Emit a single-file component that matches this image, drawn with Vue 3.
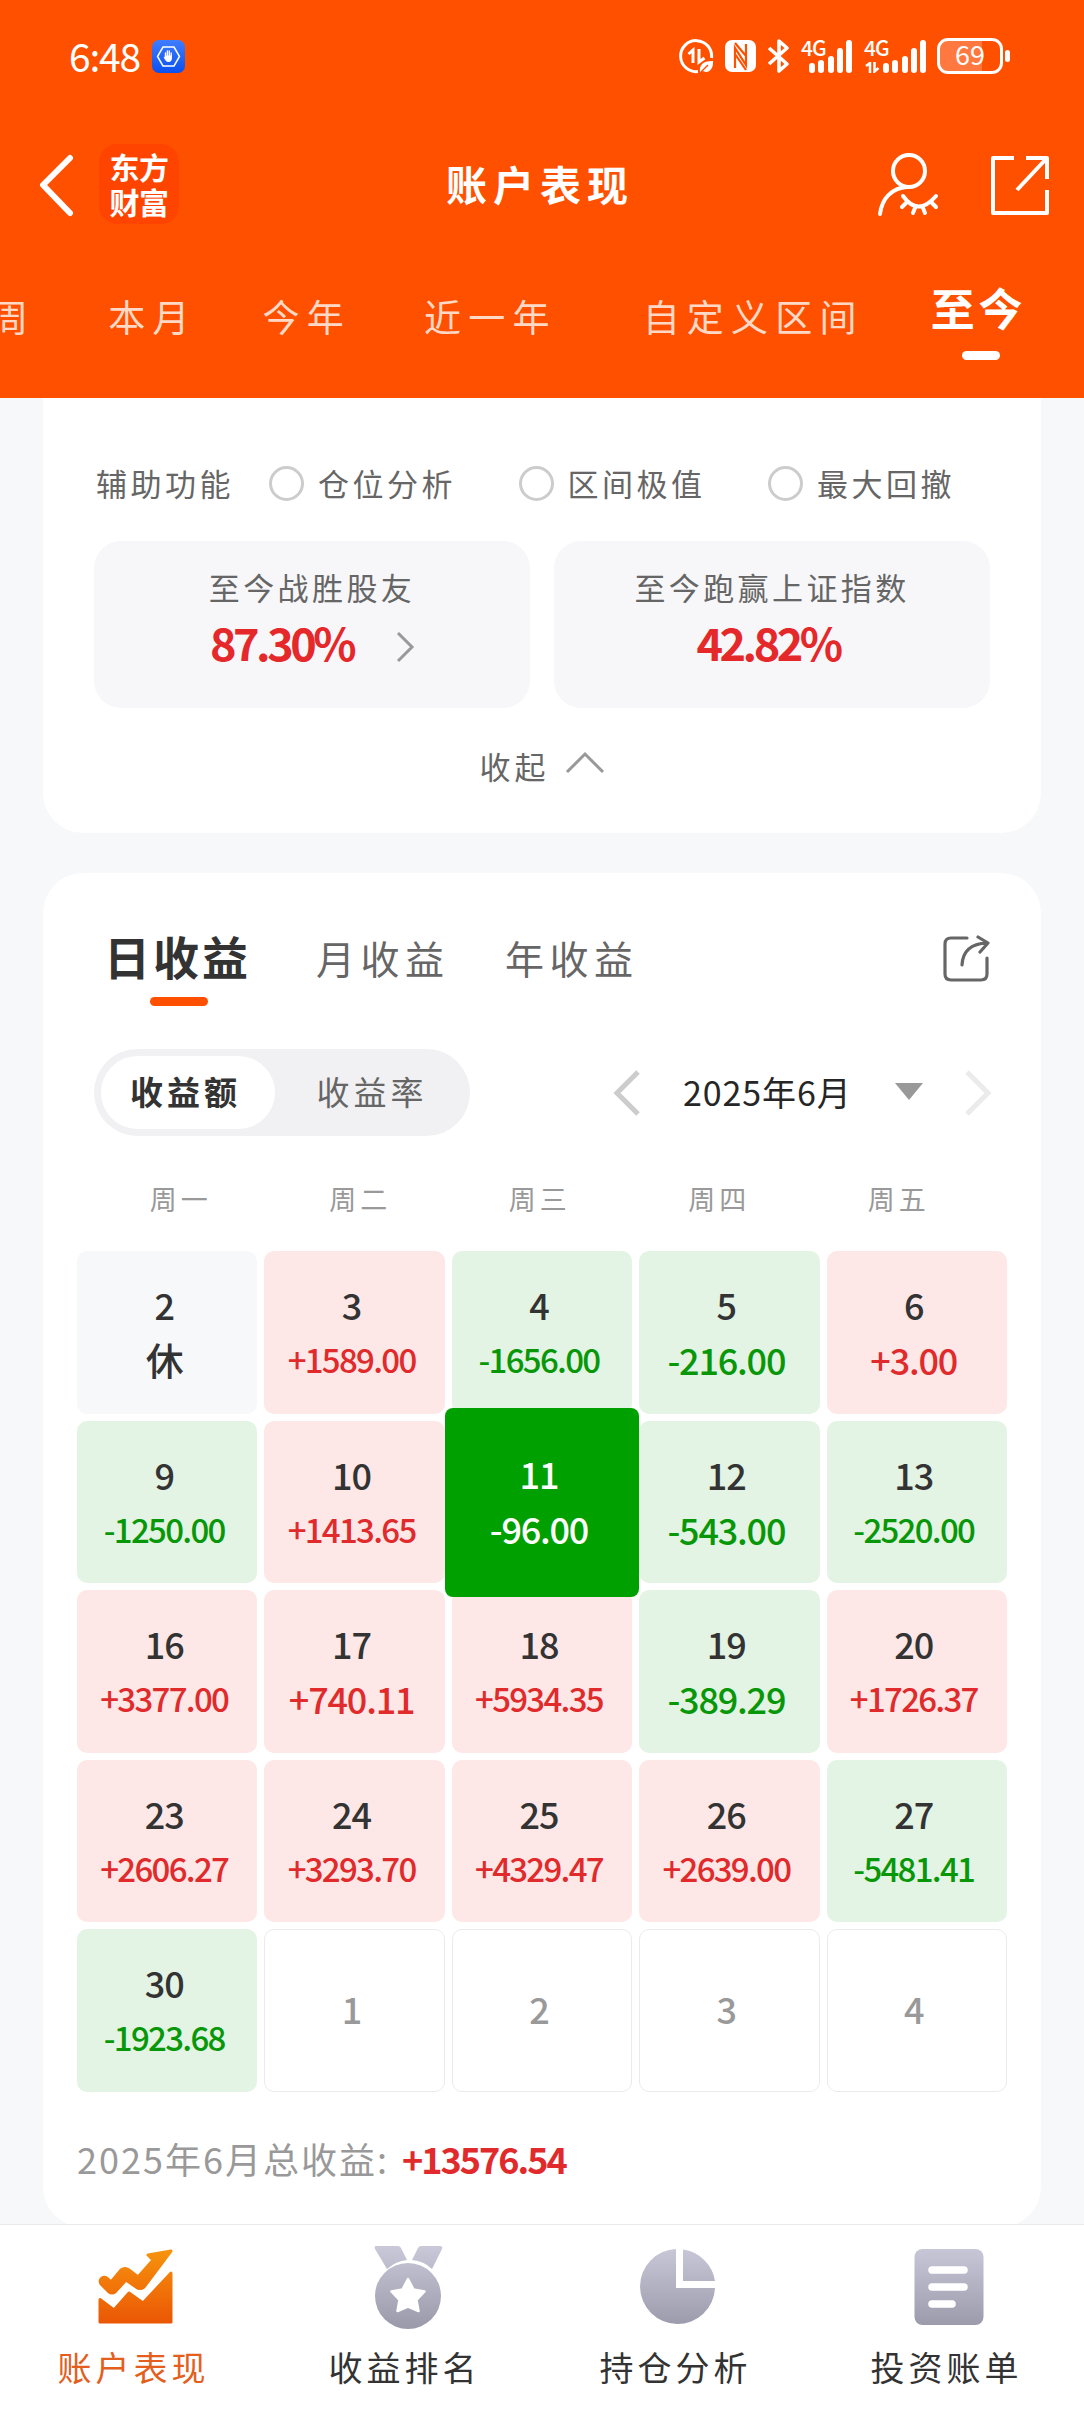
<script setup>
const ranges = ['周', '本月', '今年', '近一年', '自定义区间', '至今']
const helpers = ['仓位分析', '区间极值', '最大回撤']
const weekdays = ['周一', '周二', '周三', '周四', '周五']
const periods = ['日收益', '月收益', '年收益']
const signals = [[10, 13, 17, 25, 33], [10, 13, 17, 25, 33]]

const days = [
  [2, '休'], [3, '+1589.00'], [4, '-1656.00'], [5, '-216.00'], [6, '+3.00'],
  [9, '-1250.00'], [10, '+1413.65'], [11, '-96.00'], [12, '-543.00'], [13, '-2520.00'],
  [16, '+3377.00'], [17, '+740.11'], [18, '+5934.35'], [19, '-389.29'], [20, '+1726.37'],
  [23, '+2606.27'], [24, '+3293.70'], [25, '+4329.47'], [26, '+2639.00'], [27, '-5481.41'],
  [30, '-1923.68'], [1, ''], [2, ''], [3, ''], [4, '']
].map(([day, amount]) => ({ day, amount }))

function cellClass({ day, amount }) {
  return {
    rest: amount === '休',
    up: amount.startsWith('+'),
    down: amount.startsWith('-'),
    future: amount === '',
    selected: day === 11,
    long: amount.length > 7
  }
}
</script>

<template>
  <div class="screen">
    <header class="top">
      <div class="status">
        <span class="clock">6:48</span>
        <svg class="app-badge" width="33" height="33" viewBox="0 0 33 33">
          <defs><linearGradient id="badge" x1="0" y1="0" x2="0" y2="1"><stop offset="0" stop-color="#3f7dff" /><stop offset="1" stop-color="#0a50ee" /></linearGradient></defs>
          <rect width="33" height="33" rx="7" fill="url(#badge)" />
          <path d="M11 7h11l5.500 9.500L22 26H11L5.500 16.500z" fill="none" stroke="#fff" stroke-width="1.500" />
          <path d="M13.500 17v-4M15.400 16v-5M17.300 16v-5M19.200 17v-4" stroke="#fff" stroke-width="1.400" stroke-linecap="round" />
          <path d="M12.800 15.500h7.100v3.500q-.5 3-3.300 3-2 0-3-1.500l-2-3 1.200-.5z" fill="#fff" />
        </svg>
        <div class="indicators">
          <svg width="35" height="35" viewBox="0 0 35 35" fill="none" stroke="#fff">
            <path d="M32.500 19A15.500 15.500 0 1 0 19 32.500" stroke-width="3" />
            <path d="M9.500 15l4.500-4v13M20 10v13l5.500-4" stroke-width="3" />
            <path d="M21 33c-1-8 4-11 13-11 .5 8-4 13-10 10z" fill="#fff" stroke="none" />
            <path d="M22 33l7-7" stroke="#ff5000" stroke-width="1.500" />
          </svg>
          <svg class="nfc" width="31" height="32" viewBox="0 0 31 32">
            <rect width="31" height="32" rx="7" fill="#fff" />
            <path d="M10 28V8l11 17V4M10 3l11 13M10 14l11 16" fill="none" stroke="#ff5000" stroke-width="2.200" />
          </svg>
          <svg class="bt" width="24" height="36" viewBox="0 0 24 36" fill="none" stroke="#fff" stroke-width="3.600" stroke-linejoin="round">
            <path d="M2 10l18 16-8 7V3l8 7L2 26" />
          </svg>
          <div v-for="(bars, n) in signals" :key="n" class="signal" :class="'sim' + n">
            <span class="net">4G</span>
            <svg v-if="n" class="traffic" width="15" height="11" viewBox="0 0 15 11" fill="none" stroke="#fff" stroke-width="2.500"><path d="M1 4l4-3v10M9.500 0v9.500l4-3.500" /></svg>
            <i v-for="(h, b) in bars" :key="b" class="bar" :style="{ height: h + 'px' }"></i>
          </div>
          <div class="battery"><span>69</span></div>
          <i class="nub"></i>
        </div>
      </div>

      <div class="titlebar">
        <svg class="back" width="36" height="64" viewBox="0 0 36 64" fill="none" stroke="#fff" stroke-width="6" stroke-linecap="round" stroke-linejoin="round"><path d="M31 5L4 32l27 28" /></svg>
        <div class="logo"><span>东方</span><span>财富</span></div>
        <h1>账户表现</h1>
        <svg class="user" width="62" height="66" viewBox="0 0 62 66" fill="none" stroke="#fff" stroke-width="4" stroke-linecap="round">
          <circle cx="32" cy="19" r="16" />
          <path d="M3 62C5 46 15 36 30 35" />
          <path d="M26 44q15 21 33 0M29 51l-4 4M38 56l-2 5M46 56l2 5M55 51l4 4" />
        </svg>
        <svg class="export" width="60" height="60" viewBox="0 0 60 60" fill="none" stroke="#fff" stroke-width="4"><path d="M24 3H3v55h54V35M36 3h21v21M56 4L27 35" stroke-linejoin="round" /></svg>
      </div>

      <nav class="ranges">
        <span v-for="r in ranges" :key="r" :class="{ active: r === '至今' }">{{ r }}</span>
      </nav>
    </header>

    <main>
      <section class="card summary">
        <div class="helpers">
          <span class="caption">辅助功能</span>
          <label v-for="h in helpers" :key="h"><i></i>{{ h }}</label>
        </div>
        <div class="stats">
          <div class="stat">
            <p>至今战胜股友</p>
            <div class="value first"><b>87.30%</b>
              <svg width="20" height="32" viewBox="0 0 20 32" fill="none" stroke="#999" stroke-width="3"><path d="M2 2l14 14L2 30" /></svg>
            </div>
          </div>
          <div class="stat">
            <p>至今跑赢上证指数</p>
            <div class="value"><b>42.82%</b></div>
          </div>
        </div>
        <div class="fold">收起
          <svg width="40" height="24" viewBox="0 0 40 24" fill="none" stroke="#999" stroke-width="3"><path d="M2 21L20 3l18 18" /></svg>
        </div>
      </section>

      <section class="card income">
        <div class="periods">
          <span v-for="(p, n) in periods" :key="p" :class="{ active: n === 0 }">{{ p }}</span>
          <svg width="48" height="48" viewBox="0 0 48 48" fill="none" stroke="#666" stroke-width="3.200" stroke-linecap="round" stroke-linejoin="round">
            <path d="M24 3H8q-6 0-6 6v30q0 6 6 6h30q6 0 6-6V23" />
            <path d="M19 30Q20 9 44 8M35 2l10 6-8 9" />
          </svg>
        </div>

        <div class="controls">
          <div class="segment"><span class="on">收益额</span><span>收益率</span></div>
          <svg class="prev" width="28" height="46" viewBox="0 0 28 46" fill="none" stroke="#ccc" stroke-width="5"><path d="M25 2L4 23l21 21" /></svg>
          <span class="month">2025年6月</span>
          <svg class="drop" width="28" height="18" viewBox="0 0 28 18"><path d="M0 0h28L14 17z" fill="#999" /></svg>
          <svg class="next" width="28" height="46" viewBox="0 0 28 46" fill="none" stroke="#ebebeb" stroke-width="5"><path d="M3 2l21 21L3 44" /></svg>
        </div>

        <div class="weekdays"><span v-for="w in weekdays" :key="w">{{ w }}</span></div>

        <div class="calendar">
          <div v-for="(c, n) in days" :key="n" class="cell" :class="cellClass(c)">
            <span class="day">{{ c.day }}</span>
            <span v-if="c.amount" class="amount">{{ c.amount }}</span>
          </div>
        </div>

        <div class="total"><span>2025年6月总收益:</span><b>+13576.54</b></div>
      </section>
    </main>

    <nav class="tabs">
      <div class="tab active">
        <svg width="76" height="84" viewBox="0 0 76 84">
          <defs>
            <linearGradient id="warm" x1="0" y1="5" x2="0" y2="80" gradientUnits="userSpaceOnUse"><stop offset="0" stop-color="#f7930d" /><stop offset="1" stop-color="#ea5504" /></linearGradient>
            <linearGradient id="cool" x1="0" y1="2" x2="0" y2="82" gradientUnits="userSpaceOnUse"><stop offset="0" stop-color="#c9c8d9" /><stop offset="1" stop-color="#9b9aab" /></linearGradient>
          </defs>
          <g fill="url(#warm)" stroke="url(#warm)" stroke-width="3" stroke-linejoin="round">
            <path d="M2 54.500L16 65l15-17 14 10L73 28v49H2z" />
            <path d="M50 10l23-4-27 36q-4 3-8 0l-10-7-11 12q-3 2-6 0L3 39q-2-4 1-6 3-2 6 1l3 3 10-12q4-3 8 0l9 7 15-17z" />
          </g>
        </svg>
        <span>账户表现</span>
      </div>
      <div class="tab">
        <svg width="76" height="84" viewBox="0 0 76 84" fill="url(#cool)">
          <path d="M7 1h22q2 0 3 2l6 12q-11 1-20 9L6 4q-1-3 1-3zM49 1h22q3 0 2 3L63 24q-8-8-20-9l6-12q1-2 3-2z" />
          <circle cx="39" cy="51" r="33" />
          <path d="M39 34l5.500 10.500 11 2-8 8.500 2 11L39 61.500 28.500 66l2-11-8-8.500 11-2z" fill="#fff" stroke="#fff" stroke-width="2.500" stroke-linejoin="round" />
        </svg>
        <span>收益排名</span>
      </div>
      <div class="tab">
        <svg width="76" height="84" viewBox="0 0 76 84" fill="url(#cool)">
          <path d="M36 4v39h39A37.500 37.500 0 1 1 36 4zM43 4.500A37.500 37.500 0 0 1 75 36H43z" />
        </svg>
        <span>持仓分析</span>
      </div>
      <div class="tab">
        <svg width="76" height="84" viewBox="0 0 76 84">
          <rect x="3.500" y="4" width="69" height="76" rx="8" fill="url(#cool)" />
          <path d="M21 25h32M21 42h32M21 59h20" stroke="#fff" stroke-width="7.500" stroke-linecap="round" />
        </svg>
        <span>投资账单</span>
      </div>
    </nav>
  </div>
</template>

<style>
body { margin: 0; }
</style>

<style scoped>
.screen {
  width: 1084px;
  height: 2412px;
  overflow: hidden;
  display: flex;
  flex-direction: column;
  background: #f7f8fa;
  color: #333;
  font-family: "Noto Sans CJK SC", "Noto Sans", sans-serif;
  white-space: nowrap;
}
svg { display: block; flex: none; }

/* header */
.top { height: 398px; flex: none; background: #ff5000; color: #fff; }
.status { height: 112px; display: flex; align-items: center; padding-left: 69px; box-sizing: border-box; }
.clock { width: 83px; font-size: 39px; line-height: 56px; letter-spacing: -1.2px; padding-bottom: 3px; }
.indicators { display: flex; align-items: center; margin-left: 494px; }
.nfc { margin-left: 11px; }
.bt { margin-left: 11px; }
.signal { position: relative; height: 34px; display: flex; align-items: flex-end; gap: 3.300px; box-sizing: border-box; }
.sim0 { width: 52px; margin-left: 10px; padding-left: 8px; }
.sim1 { width: 62px; margin-left: 11px; padding-left: 19px; }
.net { position: absolute; left: 0; top: -2px; font-size: 21px; line-height: 21px; font-weight: 500; letter-spacing: -1px; }
.traffic { position: absolute; left: 1px; bottom: 0; }
.bar { width: 6px; border-radius: 3px; background: #fff; flex: none; }
.battery {
  width: 66px; height: 36px; margin-left: 11px; box-sizing: border-box;
  border: 3px solid #fff; border-radius: 11px; display: flex; justify-content: center; align-items: center;
  background: linear-gradient(90deg, #ff7840 70%, transparent 70%);
  font-size: 27px; line-height: 30px;
}
.battery span { margin-top: -5px; }
.nub { width: 5px; height: 12px; border-radius: 3px; background: #fff; margin-left: 2px; }

.titlebar { height: 144px; display: flex; align-items: center; padding-left: 39px; box-sizing: border-box; }
.back { margin-top: 1px; }
.logo {
  width: 80px; height: 80px; margin-left: 24px; border-radius: 18px; background: #ff4400;
  display: flex; flex-direction: column; align-items: center; justify-content: center;
  font-size: 30px; line-height: 36px; font-weight: 700; letter-spacing: -.5px;
}
.logo span { margin-top: -1px; }
h1 { margin: -3px 0 0 267px; width: 186px; font-size: 41px; line-height: 60px; letter-spacing: 6px; font-weight: 700; }
.user { margin: 1px 0 0 245px; }
.export { margin: 1px 0 0 51px; }

.ranges { display: flex; height: 142px; align-items: flex-start; }
.ranges span { flex: none; font-size: 37px; letter-spacing: 7.200px; line-height: 60px; margin-top: 30px; color: #ffd9c6; }
.ranges span:nth-child(1) { margin-left: -9px; }
.ranges span:nth-child(2) { margin-left: 73px; }
.ranges span:nth-child(3) { margin-left: 66px; }
.ranges span:nth-child(4) { margin-left: 73px; }
.ranges span:nth-child(5) { margin-left: 86px; }
.ranges .active { position: relative; margin-left: 67px; margin-top: 21px; color: #fff; font-size: 44px; font-weight: 700; letter-spacing: 4px; }
.ranges .active::after { content: ""; position: absolute; left: 31px; top: 74px; width: 38px; height: 9px; border-radius: 5px; background: #fff; }

/* cards */
main { height: 1826px; flex: none; overflow: hidden; padding: 0 43px; box-sizing: border-box; }
.card { background: #fff; border-radius: 40px; }
.summary { height: 435px; border-radius: 0 0 40px 40px; padding: 0 51px; box-sizing: border-box; overflow: hidden; }
.helpers { display: flex; margin-top: 60px; height: 50px; line-height: 50px; font-size: 31px; letter-spacing: 3.500px; color: #666; align-items: center; }
.caption { flex: none; margin-left: 2px; width: 173px; }
label { width: 249.500px; flex: none; display: flex; align-items: center; }
label i { width: 35px; height: 35px; box-sizing: border-box; border: 3px solid #ccc; border-radius: 50%; margin-right: 14px; }
.stats { display: flex; gap: 24px; margin-top: 33px; }
.stat { width: 436px; height: 167px; background: #f7f7fa; border-radius: 27px; padding-top: 24px; box-sizing: border-box; }
.stat p { margin: 0; text-align: center; font-size: 31px; line-height: 44px; letter-spacing: 3.400px; color: #666; }
.value { height: 66px; display: flex; justify-content: center; align-items: center; color: #e5282a; }
.value b { font-size: 45px; line-height: 66px; letter-spacing: -3.500px; margin-left: -8px; }
.first b { margin-left: 2px; }
.first svg { margin: 9px 0 0 43px; }
.fold { height: 50px; margin-top: 33px; display: flex; justify-content: center; align-items: center; font-size: 31px; line-height: 50px; letter-spacing: 4px; color: #666; }
.fold svg { margin: -7px 0 0 15px; }

.income { height: 1354px; margin-top: 40px; padding: 0 34px; box-sizing: border-box; overflow: hidden; }
.periods { display: flex; height: 140px; padding-left: 27px; align-items: flex-start; color: #666; }
.periods span { flex: none; font-size: 39px; letter-spacing: 5.500px; line-height: 60px; margin-top: 54px; width: 189px; }
.periods .active { position: relative; width: 212px; font-size: 46px; font-weight: 700; letter-spacing: 3px; line-height: 68px; margin-top: 48px; color: #333; }
.periods .active::after { content: ""; position: absolute; left: 46px; top: 76px; width: 58px; height: 9px; border-radius: 5px; background: #ff5000; }
.periods svg { margin: 62px 0 0 249px; }
.controls { display: flex; align-items: center; margin: 36px 0 0 17px; height: 87px; }
.segment { width: 376px; height: 87px; box-sizing: border-box; padding: 7px; border-radius: 44px; background: #f1f1f4; display: flex; font-size: 33px; line-height: 70px; letter-spacing: 4px; color: #666; }
.segment span { width: 174px; height: 73px; border-radius: 37px; text-align: center; padding-left: 0; box-sizing: border-box; }
.segment span:last-child { margin-left: 10px; }
.segment .on { background: #fff; font-weight: 700; color: #333; padding-right: 5px; }
.prev { margin-left: 143px; }
.month { width: 170px; margin: -2px 0 0 42px; font-size: 34px; line-height: 60px; letter-spacing: .9px; color: #262626; }
.drop { margin: -2px 0 0 42px; }
.next { margin-left: 41px; }
.weekdays { display: flex; margin: 39px 0 0 14px; height: 50px; line-height: 48px; font-size: 27px; letter-spacing: 4px; color: #999; }
.weekdays span { width: 179.500px; flex: none; text-align: center; }

.calendar { display: grid; grid-template-columns: repeat(5, 180.400px); grid-auto-rows: 162.500px; gap: 7px; margin-top: 26px; }
.cell { border-radius: 10px; display: flex; flex-direction: column; align-items: center; box-sizing: border-box; padding: 28px 6px 0 0; font-weight: 500; }
.day { font-size: 36px; line-height: 50px; letter-spacing: -1px; }
.amount { font-size: 36px; line-height: 50px; margin-top: 5px; letter-spacing: -1.200px; }
.long .amount { font-size: 33px; letter-spacing: -1.700px; }
.rest { background: #f7f8fa; }
.rest .amount { font-size: 38px; }
.up { background: #fde8e7; }
.up .amount { color: #e02a2b; }
.down { background: #e3f4e4; }
.down .amount { color: #089708; }
.future { border: 1px solid #ebebeb; padding: 0 6px 4px 0; justify-content: center; color: #999; }
.selected { margin: -13px -7px -14px; padding-top: 40px; z-index: 1; border-radius: 8px; background: #00a000; color: #fff; }
.selected .amount { color: #fff; }

.total { display: flex; margin-top: 37px; height: 60px; line-height: 58px; font-size: 36px; letter-spacing: 2px; color: #999; }
.total span { width: 325px; }
.total b { color: #e02a2b; letter-spacing: -2px; }

/* bottom navigation */
.tabs { height: 188px; flex: none; display: flex; background: #fff; border-top: 1px solid #e9e9e9; box-sizing: border-box; }
.tab { width: 271px; display: flex; flex-direction: column; align-items: center; padding-top: 20px; box-sizing: border-box; }
.tab span { font-size: 34px; line-height: 50px; letter-spacing: 4px; margin: 13px 4px 0 0; color: #333; }
.tab.active span { color: #e45f1e; }
</style>
